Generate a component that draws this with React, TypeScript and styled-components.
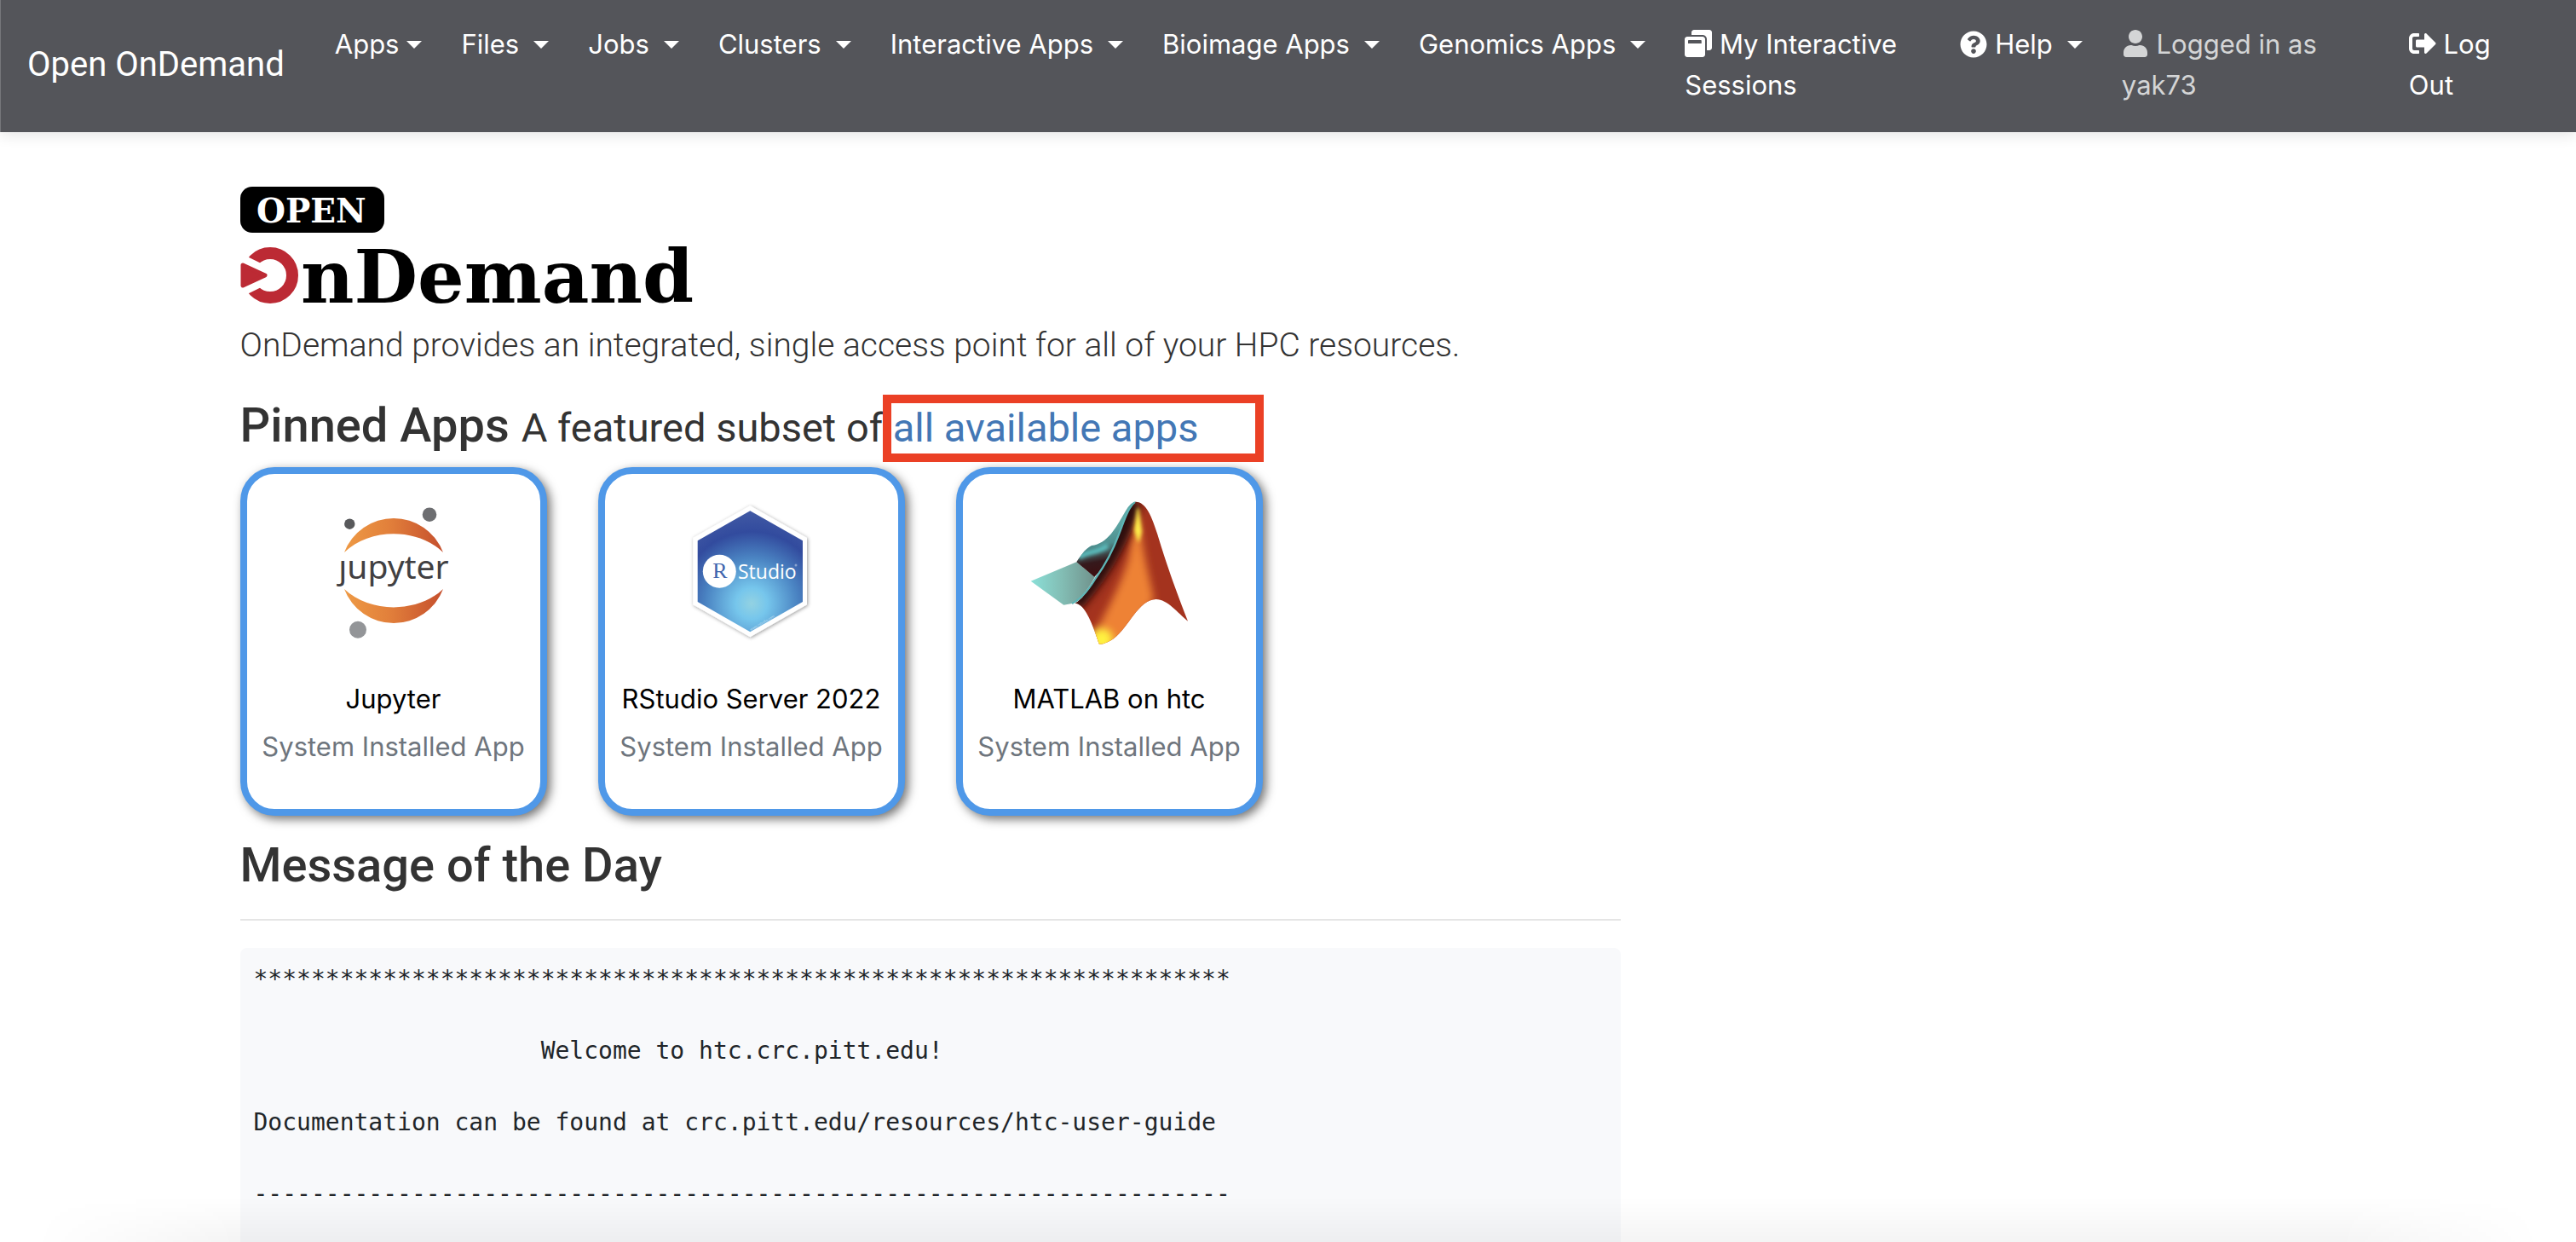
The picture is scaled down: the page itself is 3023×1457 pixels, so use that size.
import React from "react";
import styled, { createGlobalStyle } from "styled-components";
import { FaWindowRestore, FaQuestionCircle, FaUser, FaSignOutAlt } from "react-icons/fa";

const GlobalStyle = createGlobalStyle`
  *, *::before, *::after { box-sizing: border-box; }
  body {
    margin: 0;
    background: #fff;
    color: #333;
    font-family: Inter, "Liberation Sans", sans-serif;
    font-size: 31px;
    line-height: 48px;
  }
`;

const displayFont = `Roboto, "Liberation Sans", sans-serif`;

const Page = styled.div`
  display: flex;
  flex-direction: column;
  min-height: 100vh;
`;

const NavBar = styled.nav`
  display: flex;
  align-items: center;
  padding: 12px 32px 15px;
  background: #54555a;
  box-shadow: inset 1px 0 #76777b, 0 4px 16px rgba(0, 0, 0, 0.1);
  color: #fff;
`;

const Brand = styled.a`
  margin-right: 43px;
  color: inherit;
  font-family: ${displayFont};
  font-size: 40px;
  text-decoration: none;
  white-space: nowrap;
`;

const NavList = styled.ul<{ $end?: boolean }>`
  display: flex;
  align-self: stretch;
  margin: 0;
  margin-left: ${(p) => (p.$end ? "auto" : "0")};
  padding: 0;
  padding-right: ${(p) => (p.$end ? "44px" : "0")};
  list-style: none;
`;

const NavItem = styled.li<{ $width?: number }>`
  flex: ${(p) => (p.$width ? `0 0 ${p.$width}px` : "none")};
  padding: 16px;
  margin-right: 14px;
`;

const MenuButton = styled.button<{ $tight?: boolean }>`
  display: flex;
  align-items: center;
  gap: 9px;
  padding: 0;
  border: 0;
  background: none;
  color: inherit;
  font: inherit;
  white-space: nowrap;

  &::after {
    content: "";
    margin-left: ${(p) => (p.$tight ? "0" : "8px")};
    border: 9px solid transparent;
    border-top-color: currentColor;
    border-bottom: 0;
  }
`;

const NavLink = styled.a`
  display: block;
  color: inherit;
  text-decoration: none;
`;

const NavText = styled.span`
  display: block;
  color: #d4d5d6;
`;

const iconStyle = `
  width: auto;
  height: 32px;
  vertical-align: -4px;
`;
const SessionsIcon = styled(FaWindowRestore)`${iconStyle}`;
const HelpIcon = styled(FaQuestionCircle)`${iconStyle}`;
const UserIcon = styled(FaUser)`${iconStyle}`;
const LogOutIcon = styled(FaSignOutAlt)`${iconStyle}`;

const Container = styled.main`
  display: flex;
  flex: 1;
  width: 100%;
  max-width: 2520px;
  margin: 0 auto;
`;

const Column = styled.div`
  display: flex;
  flex-direction: column;
  width: 66.6667%;
  padding: 64px 30px 0;
`;

const Logo = styled.svg`
  display: block;
  width: 540px;
  height: 156px;
`;

const Lead = styled.p`
  margin: 0 0 30px;
  font-family: ${displayFont};
  font-size: 39px;
  font-weight: 300;
  line-height: 60px;
`;

const Heading = styled.h2`
  margin: 0;
  font-family: ${displayFont};
  font-size: 56px;
  font-weight: 500;
  line-height: 68px;
  white-space: nowrap;
`;

const SubHeading = styled.small`
  font-size: 47px;
  font-weight: 400;
  line-height: 1;
`;

const Highlighted = styled.span`
  position: relative;

  &::after {
    content: "";
    position: absolute;
    top: -11px;
    right: -77px;
    bottom: -13px;
    left: -12px;
    border: 10px solid #eb4025;
    pointer-events: none;
  }
`;

const AppsLink = styled.a`
  color: #4377b5;
  text-decoration: none;
`;

const Cards = styled.div`
  display: flex;
  flex-wrap: wrap;
  gap: 60px;
  margin: 15px 0 24px;
`;

const Card = styled.a`
  display: flex;
  flex-direction: column;
  align-items: center;
  width: 360px;
  padding: 16px 0 49px;
  border: 8px solid #4f98e8;
  border-radius: 40px;
  background: #fff;
  box-shadow: 4px 4px 12px rgba(0, 0, 0, 0.55);
  color: #000;
  text-decoration: none;
  white-space: nowrap;
`;

const CardIcon = styled.svg`
  width: 200px;
  height: 200px;
  margin-bottom: 24px;
`;

const CardNote = styled.span`
  margin-top: 8px;
  color: #6e757d;
`;

const Rule = styled.hr`
  width: 100%;
  margin: 29px 0 32px;
  border: 0;
  border-top: 2px solid #e5e5e5;
`;

const Message = styled.pre`
  flex: 1;
  margin: 0;
  padding: 16px;
  border-radius: 8px 8px 0 0;
  background: #f8f9fb;
  color: #212529;
  font-family: "DejaVu Sans Mono", "Liberation Mono", monospace;
  font-size: 28px;
  line-height: 42px;
`;

const BottomShade = styled.div`
  position: fixed;
  right: 0;
  bottom: 0;
  left: 0;
  height: 52px;
  background: linear-gradient(rgba(0, 0, 0, 0), rgba(0, 0, 0, 0.045));
  mask-image: linear-gradient(90deg, transparent 40px, #000 280px, #000 calc(100% - 280px), transparent calc(100% - 40px));
  pointer-events: none;
`;

const OnDemandLogo = () => (
  <Logo viewBox="0 0 540 156" role="img" aria-label="Open OnDemand">
    <rect width="169" height="54" rx="14" />
    <text x="19" y="42" fill="#fff" fontFamily="DejaVu Serif, serif" fontWeight="700" fontSize="39">OPEN</text>
    <circle cx="35" cy="104" r="26" fill="none" stroke="#bc2a34" strokeWidth="14" />
    <path d="M-6 75 L53 104 L-6 133Z" fill="#fff" />
    <path d="M3 92 L29 104 L3 116Z" fill="#bc2a34" stroke="#bc2a34" strokeWidth="5" strokeLinejoin="round" />
    <text x="71" y="136" fontFamily="DejaVu Serif, serif" fontWeight="700" fontSize="86">nDemand</text>
  </Logo>
);

const JupyterIcon = () => (
  <CardIcon viewBox="0 0 200 200" aria-hidden="true">
    <defs>
      <linearGradient id="jupyter-orange">
        <stop offset="0" stopColor="#ee9a45" />
        <stop offset="0.45" stopColor="#e2803b" />
        <stop offset="1" stopColor="#c54f2d" />
      </linearGradient>
    </defs>
    <path d="M42 76 A62 62 0 0 1 158 76 C128 47 72 47 42 76Z" fill="url(#jupyter-orange)" />
    <path d="M42 119 A62 62 0 0 0 158 119 C128 147.500 72 147.500 42 119Z" fill="url(#jupyter-orange)" />
    <circle cx="48.300" cy="42.700" r="6.200" fill="#58595b" />
    <circle cx="142" cy="31.700" r="8.300" fill="#6d6e71" />
    <circle cx="58" cy="166.700" r="10" fill="#939598" />
    <text x="100" y="107" textAnchor="middle" fill="#414042" fontFamily="Noto Sans, sans-serif" fontSize="39">ȷupyter</text>
  </CardIcon>
);

const RStudioIcon = () => (
  <CardIcon viewBox="0 0 200 200" aria-hidden="true">
    <defs>
      <radialGradient id="rstudio-glow" gradientUnits="userSpaceOnUse" cx="100" cy="136" r="108">
        <stop offset="0" stopColor="#93d2e2" />
        <stop offset="0.17" stopColor="#76c6ec" />
        <stop offset="0.5" stopColor="#4a83c2" />
        <stop offset="0.78" stopColor="#324b9e" />
        <stop offset="1" stopColor="#4159a4" />
      </radialGradient>
      <filter id="rstudio-shadow" x="-20%" y="-20%" width="140%" height="140%">
        <feDropShadow dx="1" dy="1" stdDeviation="2" floodOpacity="0.4" />
      </filter>
    </defs>
    <path d="M98.300 21.300 L165 59 V137.300 L98.300 175.300 L31.300 137.300 V59Z" fill="#fff" filter="url(#rstudio-shadow)" />
    <path d="M98.300 27.300 L160 62.300 V134 L98.300 169.300 L36.700 134 V62.300Z" fill="url(#rstudio-glow)" />
    <circle cx="62.300" cy="98.300" r="19.500" fill="#fff" />
    <text x="63" y="106" textAnchor="middle" fill="#3f65ae" fontFamily="Liberation Serif, serif" fontSize="26">R</text>
    <text x="84" y="106.500" fill="#fff" fontFamily="Open Sans, sans-serif" fontSize="23">Studio</text>
    <circle cx="152" cy="91" r="1.500" fill="#8ba3cf" />
    <text x="99" y="168" transform="rotate(-30 99 168)" fill="#fff" fillOpacity="0.6" fontFamily="Open Sans, sans-serif" fontSize="4">www.rstudio.com</text>
  </CardIcon>
);

const MatlabIcon = () => (
  <CardIcon viewBox="0 0 200 200" aria-hidden="true">
    <defs>
      <linearGradient id="matlab-sheet">
        <stop offset="0" stopColor="#8be0d8" />
        <stop offset="0.5" stopColor="#82bcb3" />
        <stop offset="1" stopColor="#70928c" />
      </linearGradient>
      <linearGradient id="matlab-back" gradientUnits="userSpaceOnUse" x1="92" y1="44" x2="102" y2="98">
        <stop offset="0" stopColor="#5fa8a6" />
        <stop offset="0.4" stopColor="#4d8e8e" />
        <stop offset="0.75" stopColor="#35191c" />
        <stop offset="1" stopColor="#3d1012" />
      </linearGradient>
      <clipPath id="matlab-front">
        <path d="M130.700 16.700 C143 16.700 150 35 156.300 54.700 C164 80 172 105 192 156.700 C180 147 168 131 154.700 131 C134 131 122 165 105 177 C99 181 93 184 88 183.700 C83 170 73 136 59.700 135.700 C70 130 78 116 84 106 C98 86 106 66 111 55 C118 38 124 17 130.700 16.700Z" />
      </clipPath>
      <clipPath id="matlab-rear">
        <path d="M61.300 87.300 C66 80 72 71 79 68 C98 66 108 46 118 29 C123 20 127 16.700 130.700 16.700 C124 26 118 45 112 56 C104 76 92 96 82.300 104.700Z" />
      </clipPath>
      <filter id="matlab-soft" x="-50%" y="-50%" width="200%" height="200%">
        <feGaussianBlur stdDeviation="5" />
      </filter>
      <filter id="matlab-fine" x="-100%" y="-50%" width="300%" height="200%">
        <feGaussianBlur stdDeviation="2" />
      </filter>
    </defs>
    <path d="M7.700 109.700 L61.300 87.300 L83 104.700 C76 118 66 131 56 136 L46.300 137.700Z" fill="url(#matlab-sheet)" />
    <g clipPath="url(#matlab-rear)">
      <rect x="55" y="10" width="80" height="100" fill="url(#matlab-back)" />
      <path d="M64 82 C74 74 84 78 98 68" fill="none" stroke="#5cc0c0" strokeWidth="6" filter="url(#matlab-fine)" />
    </g>
    <g clipPath="url(#matlab-front)">
      <rect x="50" y="10" width="150" height="180" fill="#a4331e" />
      <path d="M132 24 L138 60 C143 95 150 115 152 132 L110 188 L78 188 C84 162 108 130 122 85Z" fill="#ee8234" filter="url(#matlab-soft)" />
      <path d="M127 16 C118 42 102 88 58 136" fill="none" stroke="#2c0a10" strokeWidth="22" filter="url(#matlab-soft)" />
      <path d="M133.500 24 L137 52 L134 62 L130 50Z" fill="#fff04a" stroke="#fff04a" strokeWidth="2" filter="url(#matlab-fine)" />
      <circle cx="91" cy="178" r="13" fill="#fff23f" filter="url(#matlab-soft)" />
    </g>
    <path d="M130 17 C121 24 116 43 111 55 C104 74 94 92 84 106 C75 121 67 131 56 136" fill="none" stroke="#5db4b5" strokeWidth="2.200" />
  </CardIcon>
);

const menus = ["Apps", "Files", "Jobs", "Clusters", "Interactive Apps", "Bioimage Apps", "Genomics Apps"];

const apps = [
  { name: "Jupyter", Icon: JupyterIcon },
  { name: "RStudio Server 2022", Icon: RStudioIcon },
  { name: "MATLAB on htc", Icon: MatlabIcon },
];

const motd = [
  "*".repeat(68),
  "",
  "                    Welcome to htc.crc.pitt.edu!",
  "",
  "Documentation can be found at crc.pitt.edu/resources/htc-user-guide",
  "",
  "-".repeat(68),
].join("\n");

export default function App() {
  return (
    <Page>
      <GlobalStyle />
      <NavBar>
        <Brand href="#">Open OnDemand</Brand>
        <NavList>
          {menus.map((label, i) => (
            <NavItem key={label}>
              <MenuButton type="button" $tight={i === 0}>{label}</MenuButton>
            </NavItem>
          ))}
          <NavItem $width={309}>
            <NavLink href="#"><SessionsIcon /> My Interactive Sessions</NavLink>
          </NavItem>
        </NavList>
        <NavList $end>
          <NavItem>
            <MenuButton type="button"><HelpIcon />Help</MenuButton>
          </NavItem>
          <NavItem $width={323}>
            <NavText><UserIcon /> Logged in as yak73</NavText>
          </NavItem>
          <NavItem $width={166}>
            <NavLink href="#"><LogOutIcon /> Log Out</NavLink>
          </NavItem>
        </NavList>
      </NavBar>
      <Container>
        <Column>
          <OnDemandLogo />
          <Lead>OnDemand provides an integrated, single access point for all of your HPC resources.</Lead>
          <Heading>
            Pinned Apps{" "}
            <SubHeading>
              A featured subset of{" "}
              <Highlighted><AppsLink href="#">all available apps</AppsLink></Highlighted>
            </SubHeading>
          </Heading>
          <Cards>
            {apps.map(({ name, Icon }) => (
              <Card key={name} href="#">
                <Icon />
                <span>{name}</span>
                <CardNote>System Installed App</CardNote>
              </Card>
            ))}
          </Cards>
          <Heading>Message of the Day</Heading>
          <Rule />
          <Message>{motd}</Message>
        </Column>
      </Container>
      <BottomShade />
    </Page>
  );
}
